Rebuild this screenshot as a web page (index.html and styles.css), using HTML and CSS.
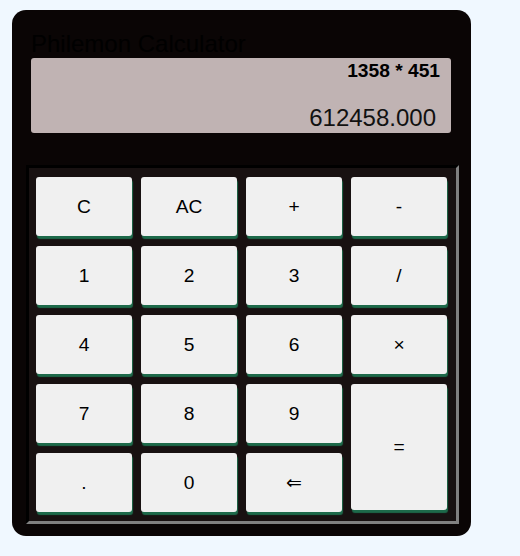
FILE: index.html
```html
<!DOCTYPE html>
<html>
<head>
<meta charset="utf-8">
<link rel="stylesheet" href="styles.css">
</head>
<body>
<div class="calculator">
  <h1 class="title">Philemon Calculator</h1>
  <div class="display">
    <div class="expression">1358 * 451</div>
    <div class="result">612458.000</div>
  </div>
  <div class="keypad">
    <button class="key">C</button>
    <button class="key">AC</button>
    <button class="key">+</button>
    <button class="key">-</button>
    <button class="key">1</button>
    <button class="key">2</button>
    <button class="key">3</button>
    <button class="key">/</button>
    <button class="key">4</button>
    <button class="key">5</button>
    <button class="key">6</button>
    <button class="key">×</button>
    <button class="key">7</button>
    <button class="key">8</button>
    <button class="key">9</button>
    <button class="key key-equals">=</button>
    <button class="key">.</button>
    <button class="key">0</button>
    <button class="key">⇐</button>
  </div>
</div>
</body>
</html>
```
FILE: styles.css
```css
html, body {
  margin: 0;
  background: #f0f8ff;
}
body {
  padding: 10px 12px;
  font-family: "Liberation Sans", Arial, sans-serif;
}
.calculator {
  box-sizing: border-box;
  width: 459px;
  height: 526px;
  background: #0a0505;
  border-radius: 14px;
  padding: 20px 20px 0 19px;
}
.title {
  margin: 0;
  font-size: 24px;
  font-weight: normal;
  line-height: 27.6px;
  height: 28px;
  color: #000;
}
.display {
  box-sizing: border-box;
  width: 420px;
  height: 75px;
  background: #c0b3b3;
  border-radius: 3px;
  display: flex;
  flex-direction: column;
  justify-content: space-between;
  align-items: flex-end;
  padding: 2px 11px 1px 11px;
}
.expression {
  font-size: 19.2px;
  font-weight: bold;
  line-height: 22px;
  color: #000;
}
.result {
  font-size: 24px;
  line-height: 27.6px;
  padding-right: 4px;
  color: #111;
}
.keypad {
  box-sizing: border-box;
  width: 433px;
  height: 359px;
  margin: 32px 0 0 -5px;
  background: #181111;
  border-style: solid;
  border-width: 3px;
  border-color: #000 #808080 #808080 #000;
  padding: 9px 9px 9px 7px;
  display: grid;
  grid-template-columns: repeat(4, 96px);
  grid-template-rows: repeat(5, 59px);
  column-gap: 9px;
  row-gap: 10px;
}
.key {
  margin: 0;
  border: none;
  border-radius: 3px;
  background: #f0f0f0;
  color: #000;
  font-family: "Liberation Sans", Arial, sans-serif;
  font-size: 19.2px;
  padding: 0;
  box-shadow: 1px 3px 1px #1d6a4a;
}
.key-equals {
  grid-column: 4;
  grid-row: 4 / span 2;
  height: 126px;
}
```
